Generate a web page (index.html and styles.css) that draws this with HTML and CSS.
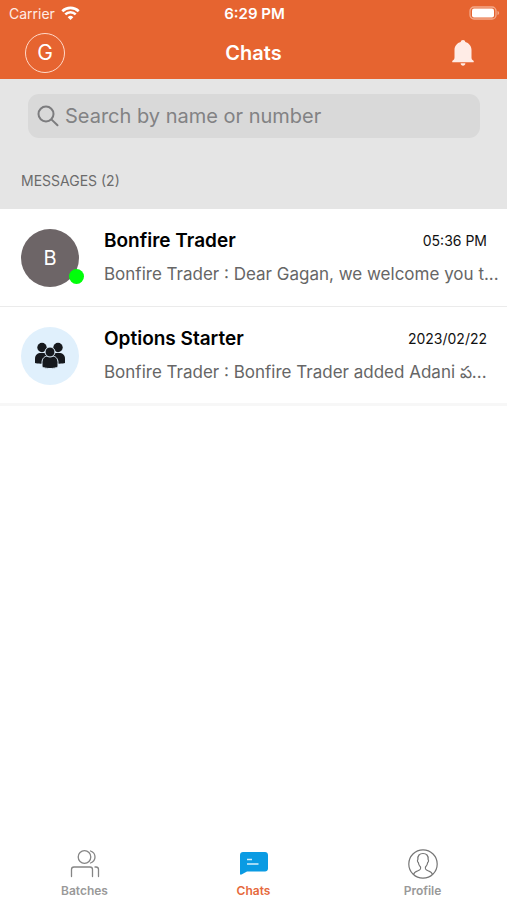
FILE: index.html
```html
<!DOCTYPE html>
<html lang="en">
<head>
    <meta charset="UTF-8">
    <meta name="viewport" content="width=device-width, initial-scale=1.0">
    <title>Chats</title>
    <link rel="stylesheet" href="styles.css">
</head>
<body>

    <header class="header">
        <div class="status-bar">
            <div class="carrier">
                <span>Carrier</span>
                <svg width="19" height="14" viewBox="0 0 18 14" fill="none" stroke="#fff" stroke-width="2.6">
                    <path d="M.8 5.200a11.700 11.700 0 0 1 16.400 0"/>
                    <path d="M3.800 8.400a7.400 7.400 0 0 1 10.400 0"/>
                    <path d="M9 14L6.200 11.200a4 4 0 0 1 5.600 0z" fill="#fff" stroke="none"/>
                </svg>
            </div>
            <span class="clock">6:29 PM</span>
            <div class="battery">
                <svg width="31" height="14" viewBox="0 0 31 14">
                    <rect x="1" y="1" width="26" height="12" rx="4" fill="none" stroke="#f3a98a" stroke-width="1.3"/>
                    <rect x="3" y="2.600" width="22" height="8.800" rx="2" fill="#fff"/>
                    <path d="M28.500 5v4c1-.3 1.600-1.100 1.600-2s-.6-1.700-1.600-2z" fill="#f3a98a"/>
                </svg>
            </div>
        </div>
        <div class="nav-bar">
            <button class="account">G</button>
            <h1 class="title">Chats</h1>
            <button class="bell" aria-label="Notifications">
                <svg width="22" height="26" viewBox="0 0 22 26" fill="#ffece6">
                    <path d="M11 0c1.300 0 2.200.9 2.300 2 3.700 1 6.200 4 6.200 8v7.500c0 1.500.6 2.500 2 3.200.4.300.5 1.600-.3 1.600H.8c-.8 0-.7-1.300-.3-1.600 1.400-.7 2-1.700 2-3.200V10c0-4 2.500-7 6.200-8 .1-1.100 1-2 2.300-2z"/>
                    <path d="M8.600 23.300h4.800c-.1 1.500-1 2.500-2.400 2.500s-2.300-1-2.400-2.500z"/>
                </svg>
            </button>
        </div>
    </header>

    <section class="search-area">
        <label class="search-box">
            <svg width="22" height="22" viewBox="0 0 22 22" fill="none" stroke="#7c7c7e" stroke-width="2" stroke-linecap="round">
                <circle cx="9" cy="9" r="7.500"/>
                <path d="M14.600 14.600L20.500 20.300"/>
            </svg>
            <input class="search-input" type="text" placeholder="Search by name or number" aria-label="Search by name or number">
        </label>
        <h2 class="section-title">MESSAGES (2)</h2>
    </section>

    <main class="chat-list">
        <a class="chat" href="#">
            <div class="avatar">
                B
                <span class="online"></span>
            </div>
            <div class="chat-body">
                <div class="chat-top">
                    <h3 class="chat-name">Bonfire Trader</h3>
                    <span class="chat-time">05:36 PM</span>
                </div>
                <p class="chat-message">Bonfire Trader : Dear Gagan, we welcome you t...</p>
            </div>
        </a>
        <a class="chat" href="#">
            <div class="avatar group">
                <svg width="32" height="28" viewBox="0 0 32 28" fill="#16191d">
                    <circle cx="8" cy="5.500" r="4.700"/>
                    <circle cx="24" cy="5.500" r="4.700"/>
                    <path d="M1 21v-4.500C1 13 3.500 11 7 11h18c3.500 0 6 2 6 5.500V21c-4 1.200-26 1.200-30 0z"/>
                    <g stroke="#e0f0fc" stroke-width="1">
                        <path d="M8 25v-4.500c0-4 2.500-6.500 6-6.500h4c3.500 0 6 2.500 6 6.500V25c-3.500 2-12.500 2-16 0z"/>
                        <circle cx="16" cy="10" r="5"/>
                    </g>
                </svg>
            </div>
            <div class="chat-body">
                <div class="chat-top">
                    <h3 class="chat-name">Options Starter</h3>
                    <span class="chat-time">2023/02/22</span>
                </div>
                <p class="chat-message">Bonfire Trader : Bonfire Trader added Adani ప...</p>
            </div>
        </a>
    </main>

    <nav class="tab-bar">
        <a class="tab" href="#">
            <svg width="30" height="30" viewBox="0 0 30 30" fill="none" stroke="#858585" stroke-width="1.300" stroke-linecap="round">
                <circle cx="14.500" cy="8" r="6.300"/>
                <path d="M20.500 2c2.700 1 4.500 3.200 4.500 6s-1.800 5-4.500 6"/>
                <path d="M1.500 27.500v-7c0-1.500 1-2.500 2.500-2.500h16c1.500 0 2.500 1 2.500 2.500v7"/>
                <path d="M25 18h1c1.500 0 2.500 1 2.500 2.500v7"/>
            </svg>
            <span>Batches</span>
        </a>
        <a class="tab active" href="#">
            <svg width="30" height="30" viewBox="0 0 30 30">
                <path d="M4 3h22c1.700 0 3 1.300 3 3v13.500c0 1.700-1.300 3-3 3H8l-5.500 3c-.8.400-1.500 0-1.500-.8V6c0-1.700 1.300-3 3-3z" fill="#0a9be3"/>
                <path d="M8 10.500h5M8 15h11.500" stroke="#d5effb" stroke-width="1.500"/>
            </svg>
            <span>Chats</span>
        </a>
        <a class="tab" href="#">
            <svg width="30" height="30" viewBox="0 0 30 30" fill="none" stroke="#757575" stroke-width="1.200">
                <circle cx="15" cy="15" r="14.200"/>
                <path d="M5.500 25.500c.5-2.500 2-3 4.500-3.800 2.500-.8 3-1.500 2.500-3.700-1.500-1.500-2-3-2.200-4.500-.9-.5-1.100-2.500-.4-3.200C9.500 6.500 11.500 4.500 15 4.500s5.500 2 5.100 5.800c.7.700.5 2.700-.4 3.200-.2 1.500-.7 3-2.200 4.500-.5 2.200 0 2.900 2.500 3.700s4 1.300 4.500 3.800"/>
            </svg>
            <span>Profile</span>
        </a>
    </nav>

</body>
</html>
```
FILE: styles.css
```css
* {
    margin: 0;
    padding: 0;
    box-sizing: border-box;
    font-family: "Inter", "Noto Sans", sans-serif;
}

body {
    min-height: 100vh;
    display: flex;
    flex-direction: column;
    background: #fff;
    color: #000;
}

svg {
    display: block;
    flex-shrink: 0;
}

a {
    color: inherit;
    text-decoration: none;
}

button {
    border: none;
    background: none;
    color: #fff;
    cursor: pointer;
}

.header {
    background: #e66430;
    color: #fff;
}

.status-bar {
    display: grid;
    grid-template-columns: 1fr auto 1fr;
    align-items: center;
    height: 26px;
    padding: 0 7px 0 9px;
    font-size: 14px;
}

.carrier {
    display: flex;
    align-items: center;
    gap: 6px;
    color: #ffece6;
}

.clock {
    font-size: 15px;
    font-weight: 600;
}

.battery {
    display: flex;
    justify-content: flex-end;
}

.nav-bar {
    display: grid;
    grid-template-columns: 1fr auto 1fr;
    align-items: center;
    height: 53px;
    padding: 0 25px;
}

.account {
    width: 40px;
    height: 40px;
    border: 1px solid #ffd9c9;
    border-radius: 50%;
    font-size: 21px;
}

.title {
    font-size: 20px;
    font-weight: 600;
}

.bell {
    justify-self: end;
    padding-right: 8px;
}

.search-area {
    padding: 15px 27px 0 28px;
    background: #e5e5e5;
}

.search-box {
    display: flex;
    align-items: center;
    gap: 6px;
    height: 44px;
    padding: 0 9px;
    border-radius: 11px;
    background: #d9d9d9;
}

.search-input {
    flex: 1;
    min-width: 0;
    border: none;
    outline: none;
    background: none;
    font-size: 20px;
}

.search-input::placeholder {
    color: #828284;
}

.section-title {
    margin-left: -7px;
    padding: 32px 0 17px;
    font-size: 14px;
    font-weight: 400;
    line-height: 22px;
    color: #6b6b6b;
}

.chat {
    display: flex;
    align-items: center;
    gap: 25px;
    padding: 18px 20px 18px 21px;
    border-bottom: 1px solid #ebebeb;
}

.chat:last-child {
    padding-bottom: 17px;
    border-bottom: 3px solid #f7f7f7;
}

.avatar {
    position: relative;
    display: flex;
    align-items: center;
    justify-content: center;
    flex-shrink: 0;
    width: 58px;
    height: 58px;
    border-radius: 50%;
    background: #6d6567;
    color: #fff;
    font-size: 20px;
}

.group {
    background: #e0f0fc;
}

.online {
    position: absolute;
    right: -5px;
    bottom: 3px;
    width: 15px;
    height: 15px;
    border-radius: 50%;
    background: #00ff0a;
}

.chat-body {
    flex: 1;
    min-width: 0;
}

.chat-top {
    display: flex;
    align-items: center;
    justify-content: space-between;
    height: 26px;
    margin-bottom: 8px;
}

.chat-name {
    font-size: 19px;
    font-weight: 600;
}

.chat-time {
    font-size: 14px;
    color: #111;
}

.chat-message {
    font-size: 17px;
    line-height: 27px;
    white-space: nowrap;
    color: #666;
}

.tab-bar {
    display: flex;
    margin-top: auto;
    padding-bottom: 1px;
}

.tab {
    flex: 1;
    display: flex;
    flex-direction: column;
    align-items: center;
    gap: 4px;
    font-size: 12px;
    font-weight: 600;
    line-height: 16px;
    color: #999;
}

.active {
    color: #e66a3d;
}
```
